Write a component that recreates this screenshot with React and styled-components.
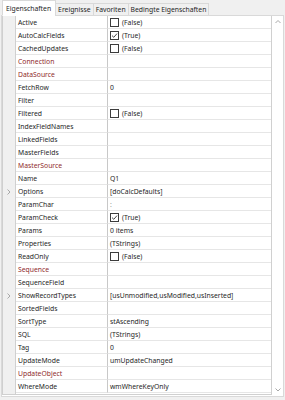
import React from 'react'
import styled, { createGlobalStyle } from 'styled-components'

const rows = [
  { name: 'Active', check: false },
  { name: 'AutoCalcFields', check: true },
  { name: 'CachedUpdates', check: false },
  { name: 'Connection', link: true },
  { name: 'DataSource', link: true },
  { name: 'FetchRow', value: '0' },
  { name: 'Filter' },
  { name: 'Filtered', check: false },
  { name: 'IndexFieldNames' },
  { name: 'LinkedFields' },
  { name: 'MasterFields' },
  { name: 'MasterSource', link: true },
  { name: 'Name', value: 'Q1' },
  { name: 'Options', value: '[doCalcDefaults]', expand: true },
  { name: 'ParamChar', value: ':', dim: true },
  { name: 'ParamCheck', check: true },
  { name: 'Params', value: '0 items' },
  { name: 'Properties', value: '(TStrings)' },
  { name: 'ReadOnly', check: false },
  { name: 'Sequence', link: true },
  { name: 'SequenceField' },
  { name: 'ShowRecordTypes', value: '[usUnmodified,usModified,usInserted]', expand: true },
  { name: 'SortedFields' },
  { name: 'SortType', value: 'stAscending' },
  { name: 'SQL', value: '(TStrings)' },
  { name: 'Tag', value: '0' },
  { name: 'UpdateMode', value: 'umUpdateChanged' },
  { name: 'UpdateObject', link: true },
  { name: 'WhereMode', value: 'wmWhereKeyOnly' },
]

const tabs = ['Eigenschaften', 'Ereignisse', 'Favoriten', 'Bedingte Eigenschaften']

const Chevron = ({ dir }) => {
  const d = {
    right: 'M1.5 0.5 L4 3 L1.5 5.5',
    up: 'M0.5 4 L3 1.5 L5.5 4',
    down: 'M0.5 1.5 L3 4 L5.5 1.5',
  }[dir]
  return (
    <svg width="6" height="6" viewBox="0 0 6 6">
      <path d={d} fill="none" stroke="#a8a8a8" strokeWidth="1" />
    </svg>
  )
}

const CheckBox = ({ on }) => (
  <Box>
    {on && (
      <svg width="7" height="7" viewBox="0 0 7 7">
        <path d="M1 3.6 L2.8 5.3 L6 1.6" fill="none" stroke="#333" strokeWidth="0.9" />
      </svg>
    )}
  </Box>
)

export default function App() {
  return (
    <>
      <GlobalStyle />
      <Frame>
        <TabBar>
          {tabs.map((t, i) => (
            <Tab key={t} $active={i === 0}>
              {t}
            </Tab>
          ))}
        </TabBar>
        <Panel>
          <Grid>
            {rows.map((r) => (
              <Row key={r.name}>
                <Gutter>{r.expand && <Chevron dir="right" />}</Gutter>
                <NameCell $link={r.link}>{r.name}</NameCell>
                <ValueCell $dim={r.dim}>
                  {r.check !== undefined ? (
                    <>
                      <CheckBox on={r.check} />
                      {r.check ? '(True)' : '(False)'}
                    </>
                  ) : (
                    r.value
                  )}
                </ValueCell>
              </Row>
            ))}
            <Filler>
              <Gutter />
              <span />
            </Filler>
          </Grid>
          <ScrollBar>
            <Chevron dir="up" />
            <Chevron dir="down" />
          </ScrollBar>
        </Panel>
      </Frame>
    </>
  )
}

/* styled components */
const GlobalStyle = createGlobalStyle`
  body {
    margin: 0;
    background: #f0f0f0;
    font-family: "Noto Sans", "Open Sans", sans-serif;
    font-size: 6.8px;
    color: #1e1e1e;
  }
`
const Frame = styled.div`
  width: 285px;
  height: 400px;
  display: flex;
  flex-direction: column;
  overflow: hidden;
`
const TabBar = styled.div`
  display: flex;
  align-items: flex-end;
  height: 16px;
  padding-left: 2px;
  margin-bottom: -1px;
  position: relative;
  z-index: 1;
`
const Tab = styled.div`
  height: ${(p) => (p.$active ? '16px' : '13px')};
  padding: ${(p) => (p.$active ? '0 4px 0 3px' : '0 2px')};
  display: flex;
  align-items: center;
  background: ${(p) => (p.$active ? '#ffffff' : '#f0f0f0')};
  border: 1px solid #d9d9d9;
  border-bottom: ${(p) => (p.$active ? '1px solid #ffffff' : '1px solid #d9d9d9')};
  margin-left: ${(p) => (p.$active ? '0' : '-1px')};
  box-sizing: border-box;
  white-space: nowrap;
  color: #1e1e1e;
`
const Panel = styled.div`
  flex: 1;
  margin: 0 1px 3px 1px;
  border: 1px solid #d9d9d9;
  background: #ffffff;
  display: flex;
  padding: 0 0 1px 0;
`
const Grid = styled.div`
  flex: 1;
  display: flex;
  flex-direction: column;
  border-left: 1px solid #cfcfcf;
  border-right: 1px solid #d0d0d0;
  border-bottom: 1px solid #d0d0d0;
`
const Row = styled.div`
  display: grid;
  grid-template-columns: 13px 92px 1fr;
  height: 13px;
`
const Filler = styled.div`
  flex: 1;
  display: grid;
  grid-template-columns: 13px 1fr;
`
const Gutter = styled.div`
  background: #f0f0f0;
  border-right: 1px solid #d0d0d0;
  display: flex;
  align-items: center;
  justify-content: center;
`
const NameCell = styled.div`
  border-bottom: 1px solid #e6e6e6;
  border-right: 1px solid #c8c8c8;
  padding-left: 2px;
  display: flex;
  align-items: center;
  white-space: nowrap;
  overflow: hidden;
  color: ${(p) => (p.$link ? '#8f2a2a' : '#1e1e1e')};
`
const ValueCell = styled.div`
  border-bottom: 1px solid #e6e6e6;
  padding-left: 2px;
  display: flex;
  align-items: center;
  gap: 3px;
  white-space: nowrap;
  overflow: hidden;
  color: ${(p) => (p.$dim ? '#9a9a9a' : '#1e1e1e')};
`
const Box = styled.span`
  width: 9px;
  height: 9px;
  box-sizing: border-box;
  border: 1px solid #3c3c3c;
  background: #ffffff;
  display: flex;
  align-items: center;
  justify-content: center;
`
const ScrollBar = styled.div`
  width: 11px;
  display: flex;
  flex-direction: column;
  justify-content: space-between;
  align-items: center;
  padding: 3px 0 2px;
  background: #ffffff;
`
